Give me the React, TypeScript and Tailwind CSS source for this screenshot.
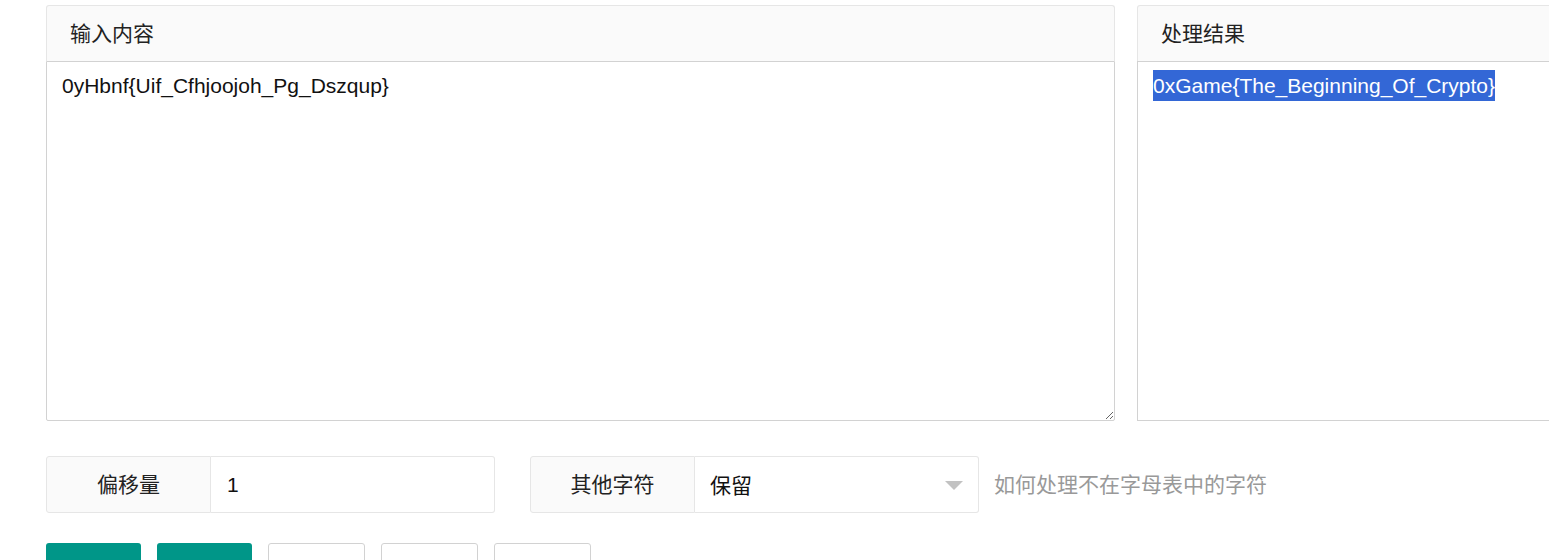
import { useState } from 'react';

const FONT = 'font-["Liberation_Sans","Noto_Sans_CJK_SC",sans-serif]';

function Panel({ title, children, width }: { title: string; children: React.ReactNode; width: string }) {
  return (
    <div className={`flex shrink-0 flex-col ${width}`}>
      {/* header */}
      <div className="flex h-[56px] items-center rounded-t-[3px] border border-b-0 border-[#e6e6e6] bg-[#fafafa] pl-[23px] text-[21px] text-[#222]">
        {title}
      </div>
      {children}
    </div>
  );
}

export default function App() {
  const [input, setInput] = useState('0yHbnf{Uif_Cfhjoojoh_Pg_Dszqup}');
  const [shift, setShift] = useState('1');

  const buttons = [
    { label: '加密', primary: true },
    { label: '解密', primary: true },
    { label: '复制', primary: false },
    { label: '清空', primary: false },
    { label: '互换', primary: false },
  ];

  return (
    <div className={`h-screen w-screen overflow-hidden bg-white ${FONT}`}>
      <div className="pl-[46px] pt-[5px]">
        {/* input / output panels */}
        <div className="flex gap-[22px]">
          <Panel title="输入内容" width="w-[1069px]">
            <textarea
              value={input}
              onChange={(e) => setInput(e.target.value)}
              className="h-[360px] w-full resize-y rounded-b-[2px] border border-[#d2d2d2] bg-white px-[15px] py-[9px] text-[21px] leading-[30px] text-[#111] outline-none"
            />
          </Panel>
          <Panel title="处理结果" width="w-[700px]">
            <div className="h-[360px] w-full border border-[#d2d2d2] bg-white px-[15px] py-[9px] text-[21px] leading-[30px] text-[#111]">
              <span className="bg-[#3367d6] py-[4px] text-white">0xGame{'{'}The_Beginning_Of_Crypto{'}'}</span>
            </div>
          </Panel>
        </div>

        {/* options row */}
        <div className="mt-[35px] flex items-center">
          <div className="flex h-[57px]">
            <div className="flex w-[165px] items-center justify-center rounded-l-[3px] border border-[#e6e6e6] bg-[#fafafa] text-[21px] text-[#222]">
              偏移量
            </div>
            <input
              value={shift}
              onChange={(e) => setShift(e.target.value)}
              className="w-[284px] rounded-r-[3px] border border-l-0 border-[#e6e6e6] bg-white pl-[16px] text-[21px] text-[#111] outline-none"
            />
          </div>

          <div className="ml-[35px] flex h-[57px]">
            <div className="flex w-[165px] items-center justify-center rounded-l-[3px] border border-[#e6e6e6] bg-[#fafafa] text-[21px] text-[#222]">
              其他字符
            </div>
            <div className="relative flex w-[284px] items-center rounded-r-[3px] border border-l-0 border-[#e6e6e6] bg-white pl-[15px] pt-[3px] text-[21px] text-[#111]">
              保留
              <span className="absolute right-[15px] top-[24px] h-0 w-0 border-x-[9px] border-t-[9px] border-x-transparent border-t-[#c2c2c2]" />
            </div>
          </div>

          <div className="ml-[15px] text-[21px] text-[#999]">如何处理不在字母表中的字符</div>
        </div>

        {/* action buttons */}
        <div className="mt-[30px] flex gap-[16px]">
          {buttons.map((b) => (
            <button
              key={b.label}
              className={
                b.primary
                  ? 'h-[57px] w-[95px] rounded-[3px] bg-[#009688] text-[21px] text-white'
                  : 'h-[57px] w-[97px] rounded-[3px] border border-[#d2d2d2] bg-white text-[21px] text-[#555]'
              }
            >
              {b.label}
            </button>
          ))}
        </div>
      </div>
    </div>
  );
}
